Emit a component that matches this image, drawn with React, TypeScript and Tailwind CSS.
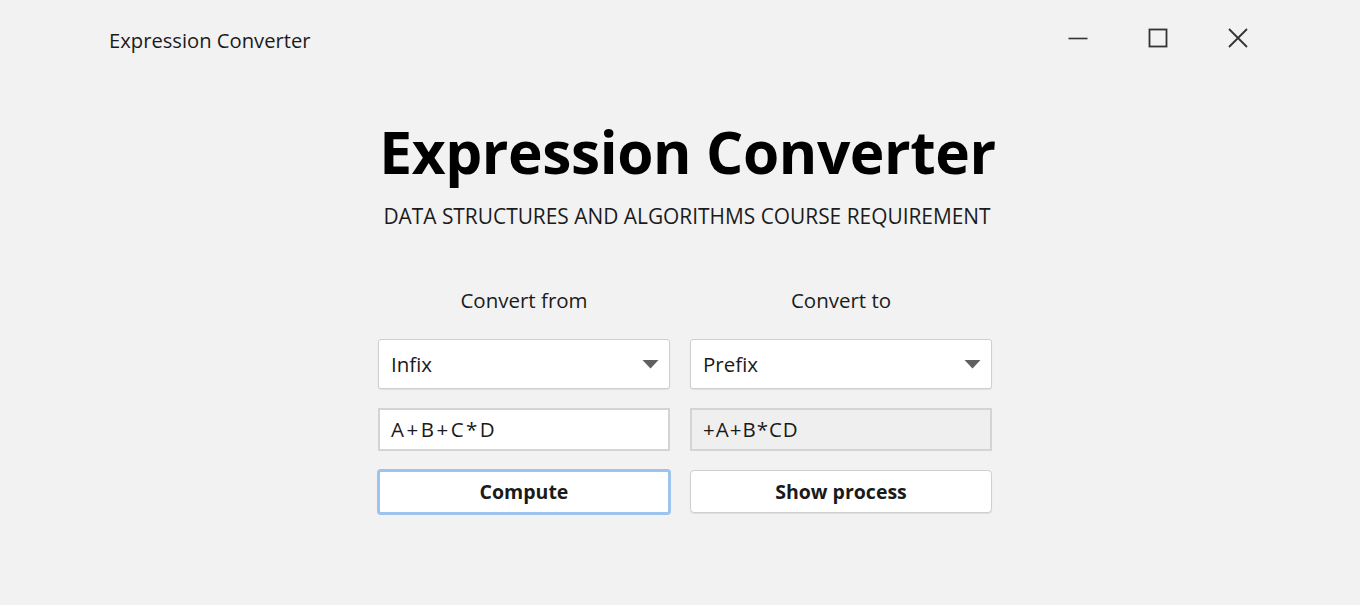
import React from "react";

function Caret() {
  return (
    <svg width="17" height="10" viewBox="0 0 17 10" className="shrink-0">
      <path d="M0.5 1 L16.5 1 L8.5 9.5 Z" fill="#606060" />
    </svg>
  );
}

export default function App() {
  const font = { fontFamily: '"Open Sans", "Noto Sans", sans-serif' };
  return (
    <div className="w-[1360px] h-[605px] bg-[#f2f2f2] text-[#1a1a1a] flex flex-col overflow-hidden" style={font}>
      <div className="h-[80px] flex items-start">
        <div className="pl-[109px] pt-[26px] text-[20.2px] leading-[28px] text-[#1b1b1b]">Expression Converter</div>
        <div className="flex-1" />
        <div className="flex items-center pt-[28px] pr-[112px] gap-[60px]">
          <svg width="20" height="20" viewBox="0 0 20 20">
            <path d="M0.5 10.5 H19.5" stroke="#333" strokeWidth="1.6" />
          </svg>
          <svg width="20" height="20" viewBox="0 0 20 20">
            <rect x="1.5" y="1.5" width="17" height="17" fill="none" stroke="#333" strokeWidth="1.8" />
          </svg>
          <svg width="20" height="20" viewBox="0 0 20 20">
            <path d="M1 1 L19 19 M19 1 L1 19" stroke="#333" strokeWidth="1.8" />
          </svg>
        </div>
      </div>
      <div className="flex flex-col items-center">
        <div className="mt-[38px] ml-[15px] text-[58.6px] leading-[66px] font-bold text-black tracking-[-0.4px]">Expression Converter</div>
        <div className="mt-[18px] ml-[14px] text-[20.9px] leading-[28px] text-[#1b1b1b]">DATA STRUCTURES AND ALGORITHMS COURSE REQUIREMENT</div>
        <div className="mt-[57px] flex gap-[20px] pl-[10px]">
          <div className="w-[292px] flex flex-col">
            <div className="h-[26px] text-[20.5px] leading-[26px] text-center text-[#1b1b1b]">Convert from</div>
            <div className="mt-[26px] h-[50px] bg-white border border-[#cfcfcf] rounded-[3px] shadow-[0_1px_1px_rgba(0,0,0,0.08)] flex items-center pl-[12px] pr-[10px]">
              <span className="flex-1 text-[20.5px]">Infix</span>
              <Caret />
            </div>
            <div className="mt-[19px] h-[43px] bg-white border-2 border-[#d4d4d4] flex items-center pl-[11px] text-[20.5px] tracking-[2.5px]">A+B+C*D</div>
            <div className="mt-[18px] -mx-[1px] h-[46px] bg-white border-[3px] border-[#9cc4ec] rounded-[4px] flex items-center justify-center text-[19.5px] font-bold">Compute</div>
          </div>
          <div className="w-[302px] flex flex-col">
            <div className="h-[26px] text-[20.5px] leading-[26px] text-center text-[#1b1b1b]">Convert to</div>
            <div className="mt-[26px] h-[50px] bg-white border border-[#cfcfcf] rounded-[3px] shadow-[0_1px_1px_rgba(0,0,0,0.08)] flex items-center pl-[12px] pr-[10px]">
              <span className="flex-1 text-[20.5px]">Prefix</span>
              <Caret />
            </div>
            <div className="mt-[19px] h-[43px] bg-[#efefef] border-2 border-[#d4d4d4] flex items-center pl-[11px] text-[20.5px] tracking-[1px]">+A+B*CD</div>
            <div className="mt-[19px] h-[43px] bg-white border border-[#cfcfcf] rounded-[4px] shadow-[0_1px_1px_rgba(0,0,0,0.08)] flex items-center justify-center text-[19.5px] font-bold">Show process</div>
          </div>
        </div>
      </div>
    </div>
  );
}
